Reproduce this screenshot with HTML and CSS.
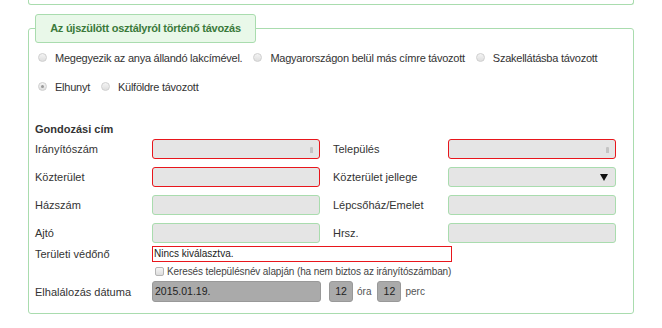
FILE: index.html
```html
<!DOCTYPE html>
<html lang="hu">
<head>
  <meta charset="UTF-8" />
  <title>Távozás</title>
  <link rel="stylesheet" href="styles.css">
</head>
<body>
  <div class="prev-panel"></div>

  <fieldset class="panel">
    <legend class="panel-title"><span>Az újszülött osztályról történő távozás</span></legend>

    <!-- távozás módja -->
    <div class="radio-row">
      <label class="radio"><span class="radio-dot"></span>Megegyezik az anya állandó lakcímével.</label>
      <label class="radio"><span class="radio-dot"></span>Magyarországon belül más címre távozott</label>
      <label class="radio"><span class="radio-dot"></span>Szakellátásba távozott</label>
    </div>
    <div class="radio-row">
      <label class="radio"><span class="radio-dot checked"></span>Elhunyt</label>
      <label class="radio"><span class="radio-dot"></span>Külföldre távozott</label>
    </div>

    <h3 class="section-title">Gondozási cím</h3>

    <div class="form-grid">
      <span class="label">Irányítószám</span>
      <div class="field field-error"><span class="spin"></span></div>
      <span class="label">Település</span>
      <div class="field field-error"><span class="spin"></span></div>

      <span class="label">Közterület</span>
      <div class="field field-error"></div>
      <span class="label">Közterület jellege</span>
      <div class="field"><span class="caret"></span></div>

      <span class="label">Házszám</span>
      <div class="field"></div>
      <span class="label">Lépcsőház/Emelet</span>
      <div class="field"></div>

      <span class="label">Ajtó</span>
      <div class="field"></div>
      <span class="label">Hrsz.</span>
      <div class="field"></div>
    </div>

    <div class="form-line nurse-line">
      <span class="label">Területi védőnő</span>
      <div class="nurse-select">Nincs kiválasztva.</div>
    </div>
    <div class="form-line check-line">
      <label class="check"><span class="checkbox"></span>Keresés településnév alapján (ha nem biztos az irányítószámban)</label>
    </div>
    <div class="form-line date-line">
      <span class="label">Elhalálozás dátuma</span>
      <div class="date-box">2015.01.19.</div>
      <div class="time-box">12</div>
      <span class="unit">óra</span>
      <div class="time-box">12</div>
      <span class="unit">perc</span>
    </div>
  </fieldset>
</body>
</html>
```

FILE: styles.css
```css
/* színek */
:root {
  --green-border: #a9dcae;
  --legend-bg: #e9f8e9;
  --legend-text: #3b7a3b;
  --text: #333333;
  --field-bg: #e5e5e5;
  --error: #e8161c;
  --date-bg: #aaaaaa;
}
* { box-sizing: border-box; }
body {
  margin: 0;
  background: #ffffff;
  color: var(--text);
  font-family: "Liberation Sans", Arial, sans-serif;
  font-size: 11px;
}

/* előző panel alja */
.prev-panel {
  margin-left: 28px;
  width: 606px;
  height: 5px;
  border: 1px solid var(--green-border);
  border-top: none;
  border-radius: 0 0 3px 3px;
}

/* PANEL */
.panel {
  margin: 9px 0 0 28px;
  width: 606px;
  min-width: 0;
  padding: 0 6px 11px 6px;
  border: 1px solid var(--green-border);
  border-radius: 3px;
}
.panel-title {
  width: 221px;
  height: 29px;
  padding: 0;
  background: var(--legend-bg);
  border: 1px solid var(--green-border);
  border-radius: 3px;
}
.panel-title span {
  display: block;
  line-height: 27px;
  text-align: center;
  font-weight: bold;
  letter-spacing: -0.25px;
  white-space: nowrap;
  color: var(--legend-text);
}

/* RÁDIÓGOMBOK */
.radio-row {
  display: flex;
  align-items: center;
  gap: 11px;
  height: 29px;
  padding-left: 3px;
  white-space: nowrap;
}
.radio {
  display: flex;
  align-items: center;
  gap: 8px;
  letter-spacing: -0.25px;
}
.radio-dot {
  flex: none;
  width: 9px;
  height: 9px;
  border-radius: 50%;
  border: 1px solid #cfcfcf;
  background: linear-gradient(#f4f4f4, #dedede);
  position: relative;
}
.radio-dot.checked::after {
  content: "";
  position: absolute;
  left: 2px;
  top: 2px;
  width: 3px;
  height: 3px;
  border-radius: 50%;
  background: #9a9a9a;
}

/* CÍM ŰRLAP */
.section-title {
  margin: 20px 0 2px 0;
  font-size: 11px;
  font-weight: bold;
  line-height: 16px;
}
.form-grid {
  display: grid;
  grid-template-columns: 117px 168px 128px 168px;
  grid-auto-rows: 20px;
  row-gap: 8px;
  align-items: center;
}
.form-grid .label:nth-child(4n+3) {
  padding-left: 13px;
}
.field {
  height: 20px;
  background: var(--field-bg);
  border: 1px solid var(--green-border);
  border-radius: 3px;
  position: relative;
}
.field-error {
  border-color: var(--error);
}
.spin {
  position: absolute;
  right: 6px;
  top: 7px;
  width: 3px;
  height: 6px;
  border-radius: 1px 1px 0 0;
  background: #c4c4c4;
}
.caret {
  position: absolute;
  right: 7px;
  top: 6px;
  border-left: 4px solid transparent;
  border-right: 4px solid transparent;
  border-top: 7px solid #111;
}

/* SOROK */
.form-line {
  display: flex;
  align-items: center;
}
.form-line .label {
  width: 117px;
  flex: none;
}
.nurse-line {
  margin-top: 3px;
  height: 16px;
}
.nurse-select {
  width: 300px;
  height: 16px;
  border: 1px solid var(--error);
  padding-left: 1px;
  line-height: 14px;
  font-size: 10px;
  color: #222;
}
.check-line {
  height: 18px;
  padding-left: 120px;
}
.check {
  display: flex;
  align-items: center;
  gap: 3px;
  font-size: 10px;
  letter-spacing: -0.12px;
  white-space: nowrap;
  color: #444;
}
.checkbox {
  width: 9px;
  height: 9px;
  border: 1px solid #b5b5b5;
  border-radius: 2px;
  background: linear-gradient(#f6f6f6, #dcdcdc);
}
.date-line {
  margin-top: 1px;
  height: 21px;
}
.date-box {
  width: 169px;
  height: 21px;
  padding-left: 2px;
  line-height: 19px;
  font-size: 10.5px;
  background: var(--date-bg);
  border: 1px solid #999;
  border-radius: 3px;
  color: #222;
}
.time-box {
  width: 24px;
  height: 21px;
  line-height: 19px;
  text-align: center;
  font-size: 10.5px;
  background: var(--date-bg);
  border: 1px solid #999;
  border-radius: 3px;
  color: #222;
  margin-left: 6px;
}
.date-box + .time-box {
  margin-left: 8px;
}
.unit {
  margin-left: 4px;
  font-size: 10px;
  color: #555;
}
```
